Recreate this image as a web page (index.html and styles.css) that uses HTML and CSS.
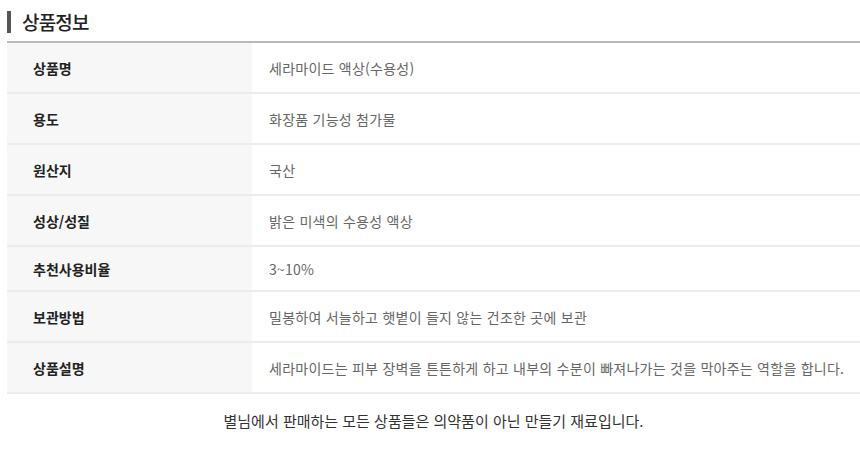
FILE: index.html
```html
<!DOCTYPE html>
<html lang="ko">
<head>
<meta charset="utf-8">
<link rel="stylesheet" href="styles.css">
</head>
<body>
<div class="wrap">
  <h2 class="title">상품정보</h2>
  <div class="table">
    <div class="row"><div class="label">상품명</div><div class="value">세라마이드 액상(수용성)</div></div>
    <div class="row"><div class="label">용도</div><div class="value">화장품 기능성 첨가물</div></div>
    <div class="row"><div class="label">원산지</div><div class="value">국산</div></div>
    <div class="row"><div class="label">성상/성질</div><div class="value">밝은 미색의 수용성 액상</div></div>
    <div class="row short"><div class="label">추천사용비율</div><div class="value">3~10%</div></div>
    <div class="row"><div class="label">보관방법</div><div class="value">밀봉하여 서늘하고 햇볕이 들지 않는 건조한 곳에 보관</div></div>
    <div class="row"><div class="label">상품설명</div><div class="value">세라마이드는 피부 장벽을 튼튼하게 하고 내부의 수분이 빠져나가는 것을 막아주는 역할을 합니다.</div></div>
  </div>
  <p class="note">별님에서 판매하는 모든 상품들은 의약품이 아닌 만들기 재료입니다.</p>
</div>
</body>
</html>
```
FILE: styles.css
```css
* { box-sizing: border-box; }
html, body { margin: 0; padding: 0; background: #fff; }
body { font-family: "Noto Sans CJK KR", "Noto Sans", sans-serif; }
.wrap { padding-left: 7px; }
.title {
  margin: 0;
  height: 43px;
  padding: 8px 0 0 15px;
  position: relative;
  font-size: 19px;
  font-weight: 500;
  letter-spacing: -0.8px;
  line-height: 28px;
  color: #222;
  border-bottom: 2px solid #b9b9b9;
}
.title::before {
  content: "";
  position: absolute;
  left: 0;
  top: 11px;
  width: 4px;
  height: 22px;
  background: #555;
}
.table { display: flex; flex-direction: column; }
.row {
  display: grid;
  grid-template-columns: 245px 1fr;
  height: 51px;
  border-bottom: 2px solid #ececec;
}
.row.short { height: 45px; }
.label {
  background: #f7f7f7;
  display: flex;
  align-items: center;
  padding-left: 26px;
  font-size: 14px;
  font-weight: 700;
  color: #222;
}
.value {
  display: flex;
  align-items: center;
  padding-left: 17px;
  font-size: 14px;
  letter-spacing: 0.25px;
  color: #666;
}
.note {
  margin: 16px 0 0;
  text-align: center;
  font-size: 15px;
  color: #333;
  line-height: 22px;
}
```
